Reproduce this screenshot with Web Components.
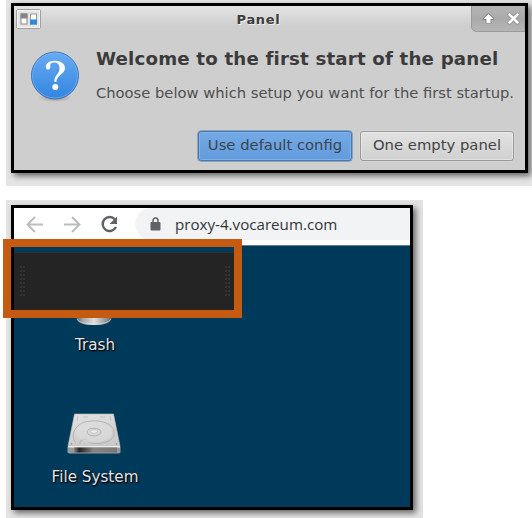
<!DOCTYPE html>
<html lang="en"><head><meta charset="utf-8"><title>Panel setup</title>
<style>
html,body{margin:0;background:#fff;overflow:hidden}
body{width:532px;height:518px;font-family:"DejaVu Sans",sans-serif}
</style></head><body>
<setup-guide></setup-guide>
<script>
const define=(name,html)=>customElements.define(name,class extends HTMLElement{
  constructor(){super();this.attachShadow({mode:'open'}).innerHTML=html;}
});

define('shadow-frame',`<style>
:host{display:block;box-sizing:border-box;background:#e4e4e4}
.frame{box-sizing:border-box;width:100%;height:100%;border:3px solid #000;box-shadow:3px 3px 6px rgba(0,0,0,.55);position:relative}
</style><div class="frame"><slot></slot></div>`);

define('title-bar',`<style>
:host{display:grid;grid-template-columns:32px 1fr 54px;height:26px;background:linear-gradient(#e4e4e4,#cecece 20px)}
.menu{margin:3px 0 0 2px;width:26px;height:21px}
.title{font:bold 13px/27px "DejaVu Sans",sans-serif;color:#3c3c3c;text-shadow:1px 1px #eee;letter-spacing:.7px;text-align:center}
.controls{justify-self:end;width:54px;height:26px}
svg{display:block}
</style>
<svg class="menu" viewBox="0 0 26 21"><rect x=".5" y=".5" width="24" height="19" rx="1.5" fill="#e4e4e4" stroke="#a0a0a0"/><rect x="1.5" y="1.5" width="22" height="17" fill="none" stroke="#f4f4f4"/>
<rect x="5" y="5" width="6" height="10" fill="#fff" stroke="#888"/><path d="M4.500 4.500h7v5h-7z" fill="#858585"/><rect x="14.500" y="5" width="6" height="10" fill="#fff" stroke="#9a9a9a"/><path d="M14 10.500h7v5h-7z" fill="#3288d8"/></svg>
<div class="title"><slot></slot></div>
<svg class="controls" viewBox="0 0 54 26"><defs><linearGradient id="g" x2="0" y2="1"><stop stop-color="#b5b5b5"/><stop offset=".5" stop-color="#aaa"/><stop offset="1" stop-color="#b6b6b6"/></linearGradient></defs><path d="M.5 0v20q0 5.500 6 5.500H54V0" fill="url(#g)" stroke="#999"/>
<path d="M17.500 8L22.500 13H19.500V16.500H15.500V13H12.500Z" fill="#fff" stroke="#888" stroke-width="2" stroke-linejoin="round"/><path d="M17.500 8L22.500 13H19.500V17H15.500V13H12.500Z" fill="#fff"/>
<path d="M38.500 8.500l8 8m0-8l-8 8" stroke="#8a8a8a" stroke-width="4" stroke-linecap="round"/><path d="M38.500 8.500l8 8m0-8l-8 8" stroke="#fff" stroke-width="2.500" stroke-linecap="round"/></svg>`);

define('question-icon',`<style>:host{display:block;width:50px;height:54px}svg{display:block}
</style><svg width="50" height="54" viewBox="0 0 50 54"><defs><linearGradient id="b" x2="0" y2="1"><stop stop-color="#68abf4"/><stop offset="1" stop-color="#3285df"/></linearGradient><radialGradient id="s"><stop stop-color="#765" stop-opacity=".65"/><stop offset="1" stop-color="#765" stop-opacity="0"/></radialGradient></defs>
<ellipse cx="25" cy="47.500" rx="17" ry="4.500" fill="url(#s)"/><circle cx="25" cy="25.500" r="23.500" fill="url(#b)" stroke="#3c72b5"/><circle cx="25" cy="25.500" r="22.500" fill="none" stroke="#7ab5f5" stroke-opacity=".6"/>
<path transform="translate(-2.600 -.8) scale(1.100 .980)" d="M17 19.500C16 14.500 19.500 11.700 24.800 11.700C31 11.700 34.200 15 34.200 19.300C34.200 25.500 26.700 26 26.300 33.500H24.500C24.200 26.800 29.200 25.400 29.200 19.500C29.200 15.500 27.500 13.500 24.200 13.500C21.500 13.500 20.300 14.700 20.800 17.300C21.300 20.800 17.600 22 17 19.500Z" fill="#fff"/><circle cx="25.300" cy="37" r="3" fill="#fff"/></svg>`);

define('dialog-button',`<style>
:host{display:block;box-sizing:border-box;width:154px;height:30px;border:1px solid #999;border-radius:3px;background:linear-gradient(#e2e2e2,#d0d0d0);box-shadow:inset 0 0 0 1px rgba(255,255,255,.35),0 0 0 1px rgba(255,255,255,.15);font-size:14.800px;line-height:26px;text-align:center;color:#444;white-space:nowrap}
:host([primary]){background:linear-gradient(#73aae6,#629bdc);border-color:#4b79ae;box-shadow:inset 0 0 0 1px #7eb1e8,0 0 0 .5px #4b79ae;color:#3c444e}
</style><slot></slot>`);

define('setup-dialog',`<style>
:host{display:flex;flex-direction:column;height:100%;background:#cecece}
.body{display:grid;grid-template-columns:50px 1fr;column-gap:16px;padding:18px 0 0 16px}
.copy{white-space:nowrap;color:#3b3b3b}
h1{font-size:18.200px;line-height:24px;margin:-3px 0 0;letter-spacing:.180px;font-variant-ligatures:common-ligatures}
p{font-size:14.720px;line-height:20px;margin:12px 0 0;color:#505050}
.actions{display:flex;gap:8px;justify-content:flex-end;padding:0 11px 0 0;margin-top:auto;margin-bottom:9.500px}
</style><title-bar>Panel</title-bar>
<div class="body"><question-icon></question-icon><div class="copy"><h1>Welcome to the first start of the panel</h1><p>Choose below which setup you want for the first startup.</p></div></div>
<div class="actions"><dialog-button primary>Use default config</dialog-button><dialog-button>One empty panel</dialog-button></div>`);

define('browser-bar',`<style>
:host{display:flex;height:38px;box-sizing:border-box;background:#fff;border-bottom:1px solid #647d8d}
.nav{flex:none;width:121px;height:37px}
.address{flex:1;margin:0 0 5px;background:#f1f3f4;border-radius:16px 0 0 16px;display:flex;align-items:center;font:15.150px/32px "Open Sans","Noto Sans",sans-serif;color:#33363a;height:32px}
.address svg{margin:0 14px 0 15px;flex:none}
</style><svg class="nav" viewBox="0 0 121 37" fill="none" stroke-width="2"><g stroke="#bbbcbe"><path d="M29 16.500H14M21 9l-7.500 7.500L21 24"/><path d="M50 16.500H65M58 9l7.500 7.500L58 24"/></g><path d="M101 11.500A7 7 0 1 0 102 19" stroke="#5f6368" stroke-width="2.400"/><path d="M103 8.500v7.500h-7.500z" fill="#5f6368"/></svg>
<div class="address"><svg width="11" height="14" viewBox="0 0 11 14"><path d="M3 6V3.500a2.500 2.500 0 0 1 5 0V6" fill="none" stroke="#5f6368" stroke-width="1.500"/><rect x=".5" y="5" width="10" height="8.500" rx="1" fill="#5f6368"/></svg><span><slot></slot></span></div>`);

define('drive-icon',`<style>:host{display:block;width:56px;height:42px}svg{display:block}</style>
<svg width="56" height="42" viewBox="0 0 56 42"><defs><linearGradient id="t" x2=".3" y2="1"><stop stop-color="#e3e3e3"/><stop offset="1" stop-color="#cbcbcb"/></linearGradient><linearGradient id="f"><stop stop-color="#888"/><stop offset=".12" stop-color="#222"/><stop offset=".45" stop-color="#858585"/><stop offset="1" stop-color="#777"/></linearGradient></defs>
<path d="M8.500 1h39L54 33H2z" fill="url(#t)" stroke="#bbb" stroke-width=".6"/><path d="M2 33h52l.5 1v5.500l-1.500 1H3l-1.500-1V34z" fill="#999"/><path d="M2 33h52v1.500H2z" fill="#ededed"/><rect x="8" y="34.500" width="43" height="5" fill="url(#f)"/>
<path d="M10 30C4 24 8 12 19 9C31 6 47 9 48 19C49 27 39 32 26 30C20 29 22 25 16 27Q13 28 14 31" fill="none" stroke="#aaa" stroke-width=".8"/><ellipse cx="28" cy="19.500" rx="18" ry="10" fill="#e0e0e0" opacity=".5"/><ellipse cx="28" cy="19" rx="7" ry="3.800" fill="#d8d8d8" stroke="#aaa" stroke-width=".8"/><ellipse cx="28" cy="18.500" rx="3.500" ry="1.800" fill="#eee" stroke="#b5b5b5" stroke-width=".6"/><path d="M12 3l-1 5m33-5l1 5M17 4h5m12 0h5" stroke="#bbb" stroke-width=".8"/><g fill="#888"><circle cx="5.500" cy="31" r=".8"/><circle cx="50.500" cy="31" r=".8"/></g></svg>`);

define('desktop-label',`<style>:host{display:block;width:140px;text-align:center;color:#e0e5e8;font-size:15.200px;line-height:20px;white-space:nowrap;text-shadow:1px 1px 1px #000,0 1px 2px #000}</style><slot></slot>`);

define('desktop-area',`<style>
:host{display:flex;flex-direction:column;align-items:center;width:162px;height:261px;box-sizing:border-box;padding-top:60px}
.trash{height:20px;width:36px;margin-right:2px}.trash svg{display:block}
desktop-label{margin-top:9px}drive-icon{margin-top:58px;margin-right:2px}drive-icon + desktop-label{margin-top:12px}
</style><div class="trash"><svg width="36" height="20" viewBox="0 0 36 20"><defs><linearGradient id="m"><stop stop-color="#666"/><stop offset=".2" stop-color="#aaa"/><stop offset=".5" stop-color="#dedede"/><stop offset=".75" stop-color="#aaa"/><stop offset="1" stop-color="#666"/></linearGradient></defs><path d="M.5 0h35v13q-2 6-17.500 6T.5 13z" fill="url(#m)"/><path d="M1 13q3 5 17 5t17-5" fill="none" stroke="#eee" stroke-opacity=".5"/></svg></div>
<desktop-label>Trash</desktop-label><drive-icon></drive-icon><desktop-label>File System</desktop-label>`);

define('panel-highlight',`<style>
:host{display:block;position:absolute;box-sizing:border-box;left:-11px;top:31px;width:239px;height:79px;border:8px solid #c55a11}
.panel{position:absolute;left:3px;top:5px;width:220px;height:58px;background:#242424;border-top:1px solid #303030;box-sizing:border-box;display:flex;justify-content:space-between;padding:13px 3px 0 6px}
.grip{width:6px;height:31px;background:radial-gradient(circle at 1px 1px,#343434 .7px,#181818 1px,transparent 1.500px) 0 0/3px 4px}
</style><div class="panel"><div class="grip"></div><div class="grip"></div></div>`);

define('setup-guide',`<style>
:host{display:flex;flex-direction:column;align-items:flex-start;gap:14px;padding-left:6px}
.dialog{width:526px;height:186px;padding:3px 4px 13px 5px}
.browser{width:417px;height:318px;padding:5px 10px 8px 5px}
.screen{height:100%;background:#003a5b}
</style><shadow-frame class="dialog"><setup-dialog></setup-dialog></shadow-frame>
<shadow-frame class="browser"><div class="screen"><browser-bar>proxy-4.vocareum.com</browser-bar><desktop-area></desktop-area></div><panel-highlight></panel-highlight></shadow-frame>`);
</script></body></html>
